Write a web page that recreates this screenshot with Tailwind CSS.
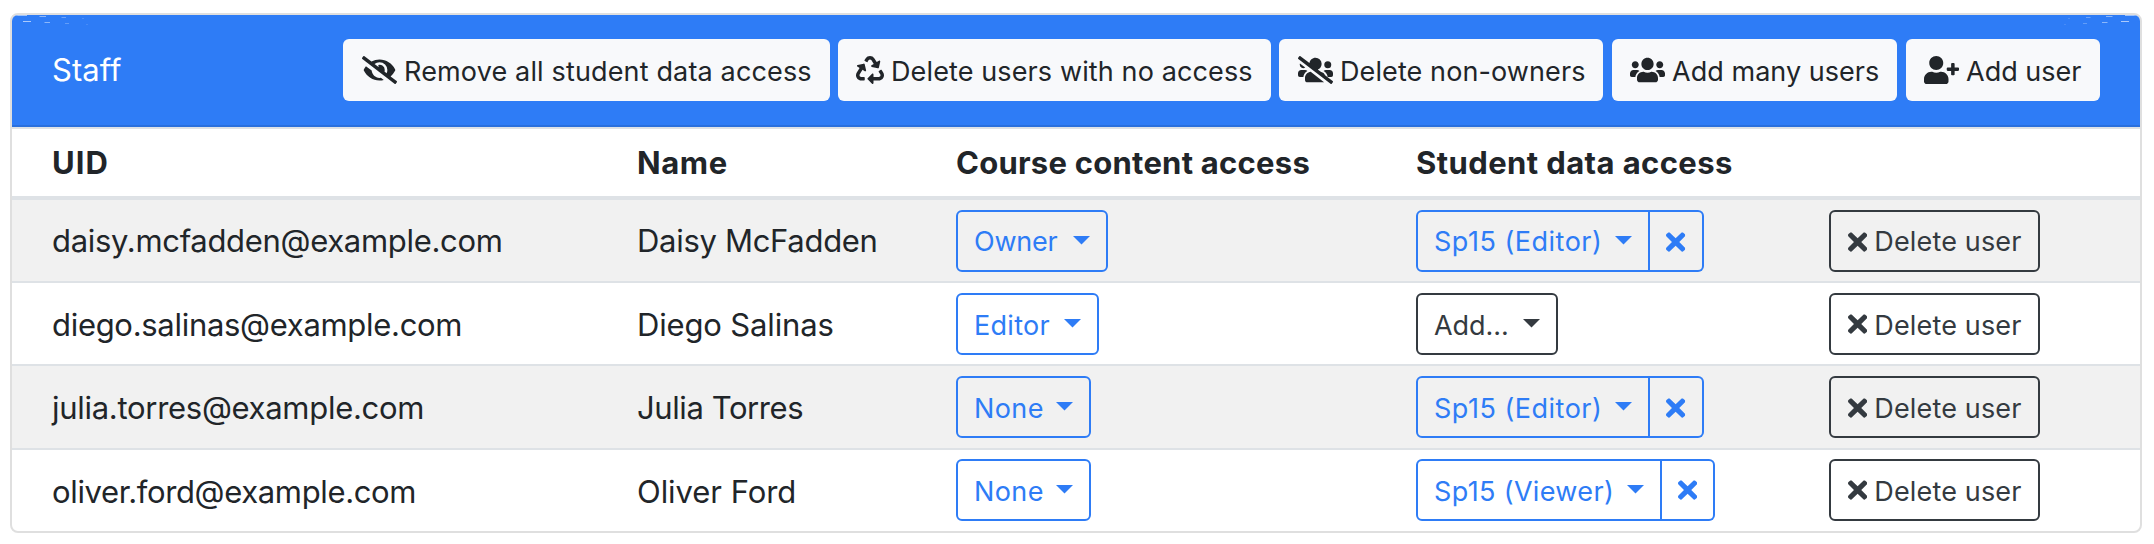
<!DOCTYPE html>
<html lang="en">
<head>
<meta charset="utf-8">
<title>Staff</title>
<script src="https://cdn.jsdelivr.net/npm/@tailwindcss/browser@4"></script>
</head>
<body class="bg-white font-[Inter,sans-serif] text-[#212529]">
<svg class="hidden">
  <symbol id="times" viewBox="0 0 352 512"><path d="M242.72 256l100.07-100.07c12.28-12.28 12.28-32.19 0-44.48l-22.24-22.24c-12.28-12.28-32.19-12.28-44.48 0L176 189.28 75.93 89.21c-12.28-12.28-32.19-12.28-44.48 0L9.21 111.45c-12.28 12.28-12.28 32.19 0 44.48L109.28 256 9.21 356.07c-12.28 12.28-12.28 32.19 0 44.48l22.24 22.24c12.28 12.28 32.2 12.28 44.48 0L176 322.72l100.07 100.07c12.28 12.28 32.2 12.28 44.48 0l22.24-22.24c12.28-12.28 12.28-32.19 0-44.48L242.72 256z"/></symbol>
  <symbol id="flecks" viewBox="0 0 80 12"><g fill="#fff"><path opacity=".55" d="M3 0h12v1H6z"/><path opacity=".45" d="M27 1h7v1h-6z"/><path opacity=".3" d="M49 2h5v1h-4z"/><path opacity=".15" d="M70 3h2v1h-2z"/><path opacity=".6" d="M11 6h8v1h-8z"/><path opacity=".45" d="M32 7h6v1h-5z"/><path opacity=".25" d="M53 8h4v1h-4z"/><path opacity=".12" d="M74 9h2v1h-2z"/></g></symbol>
</svg>
<main class="pt-[13px] pl-[10px] w-[2142px]">
<section class="relative border-2 border-[#dfdfdf] rounded-[8px] overflow-hidden h-[520px]">
  <svg class="absolute left-0 top-0 w-[80px] h-[12px]"><use href="#flecks"/></svg>
  <svg class="absolute right-0 top-0 w-[80px] h-[12px] -scale-x-100"><use href="#flecks"/></svg>
  <header class="flex items-center h-[112px] bg-[#2e7cf6] border-b-2 border-[#296fdd] pl-[40px] pr-[40px] text-white">
    <h2 class="text-[31px] tracking-[0.04px] pt-[1px]">Staff</h2>
    <div class="ml-auto flex text-[27px] text-[#212529] leading-none">
      <button class="flex items-center h-[62px] w-[487px] bg-[#f8f9fb] rounded-[6px] pl-[19px] mr-[8px]">
        <svg class="w-[35px] h-[28px] fill-current shrink-0" viewBox="0 0 640 512"><path d="M320 400c-75.85 0-137.25-58.71-142.9-133.11L72.2 185.82c-13.79 17.3-26.48 35.59-36.72 55.59a32.35 32.35 0 0 0 0 29.19C89.71 376.41 197.07 448 320 448c26.91 0 52.87-4 77.89-10.46L346 397.39a144.13 144.13 0 0 1-26 2.61zm313.82 58.1l-110.55-85.44a331.25 331.25 0 0 0 81.25-102.07 32.35 32.35 0 0 0 0-29.19C550.29 135.59 442.93 64 320 64a308.15 308.15 0 0 0-147.32 37.7L45.46 3.37A16 16 0 0 0 23 6.18L3.37 31.45A16 16 0 0 0 6.18 53.9l588.36 454.73a16 16 0 0 0 22.46-2.81l19.64-25.27a16 16 0 0 0-2.82-22.45zM450.19 314.6l-39.32-30.38A94.75 94.75 0 0 0 416 256a94.76 94.76 0 0 0-121.31-92.21A47.65 47.65 0 0 1 304 192a46.64 46.64 0 0 1-1.54 10l-73.61-56.89A142.31 142.31 0 0 1 320 112a143.92 143.92 0 0 1 144 144c0 21.63-5.29 41.79-13.81 60.12z"/></svg>
        <span class="whitespace-nowrap pl-[7px] pt-[2px] tracking-[0.15px]">Remove all student data access</span>
      </button>
      <button class="flex items-center h-[62px] w-[433px] bg-[#f8f9fb] rounded-[6px] pl-[18px] mr-[8px]">
        <svg class="w-[28px] h-[28px] fill-current shrink-0" viewBox="0 0 512 512"><path d="M184.561 261.903c3.232 13.997-12.123 24.635-24.068 17.168l-40.736-25.455-50.867 81.402C55.606 356.273 70.96 384 96.012 384H148c6.627 0 12 5.373 12 12v40c0 6.627-5.373 12-12 12H96.115c-75.334 0-121.302-83.048-81.408-146.88l50.822-81.388-40.725-25.448c-12.081-7.547-8.966-25.961 4.879-29.158l110.237-25.45c8.611-1.988 17.201 3.381 19.189 11.99l25.452 110.237zm98.561-182.915l41.289 66.076-40.74 25.457c-12.051 7.528-9 25.953 4.879 29.158l110.237 25.45c8.672 1.999 17.215-3.438 19.189-11.99l25.45-110.237c3.197-13.844-11.99-24.719-24.068-17.168l-40.687 25.424-41.263-66.082c-37.521-60.033-125.209-60.171-162.816 0l-17.963 28.766c-3.51 5.62-1.8 13.021 3.82 16.533l33.919 21.195c5.62 3.512 13.024 1.803 16.536-3.817l17.961-28.743c12.712-20.341 41.973-19.676 54.257-.022zM497.288 301.12l-27.515-44.065c-3.511-5.623-10.916-7.334-16.538-3.821l-33.861 21.159c-5.62 3.512-7.33 10.915-3.818 16.536l27.564 44.112c13.257 21.211-2.057 48.96-27.136 48.96H320V336.02c0-14.213-17.242-21.383-27.313-11.313l-80 79.981c-6.249 6.248-6.249 16.379 0 22.627l80 79.989C302.689 517.308 320 510.3 320 495.989V448h95.88c75.274 0 121.335-82.997 81.408-146.88z"/></svg>
        <span class="whitespace-nowrap pl-[7px] pt-[2px] tracking-[0.12px]">Delete users with no access</span>
      </button>
      <button class="flex items-center h-[62px] w-[324px] bg-[#f8f9fb] rounded-[6px] pl-[19px] mr-[9px]">
        <svg class="w-[35px] h-[28px] fill-current shrink-0" viewBox="0 0 640 512"><path d="M132.65,212.32,36.21,137.78A63.4,63.4,0,0,0,32,160a63.84,63.84,0,0,0,100.65,52.32Zm40.44,62.28A63.79,63.79,0,0,0,128,256H64A64.06,64.06,0,0,0,0,320v32a32,32,0,0,0,32,32H97.91A146.62,146.62,0,0,1,173.09,274.6ZM544,224a64,64,0,1,0-64-64A64.06,64.06,0,0,0,544,224ZM500.56,355.11a114.24,114.24,0,0,0-84.47-65.28L361,247.23c41.46-16.3,71-55.92,71-103.23A111.93,111.93,0,0,0,320,32c-57.14,0-103.69,42.83-110.6,98.08L45.46,3.38A16,16,0,0,0,23,6.19L3.37,31.46A16,16,0,0,0,6.18,53.91L594.53,508.63A16,16,0,0,0,617,505.81l19.64-25.26a16,16,0,0,0-2.81-22.45ZM128,403.21V432a48,48,0,0,0,48,48H464a47.45,47.45,0,0,0,12.57-1.87L232,289.13C173.74,294.83,128,343.42,128,403.21ZM576,256H512a63.79,63.79,0,0,0-45.09,18.6A146.29,146.29,0,0,1,542,384h66a32,32,0,0,0,32-32V320A64.06,64.06,0,0,0,576,256Z"/></svg>
        <span class="whitespace-nowrap pl-[7px] pt-[2px] tracking-[0.1px]">Delete non-owners</span>
      </button>
      <button class="flex items-center h-[62px] w-[285px] bg-[#f8f9fb] rounded-[6px] pl-[18px] mr-[9px]">
        <svg class="w-[35px] h-[28px] fill-current shrink-0" viewBox="0 0 640 512"><path d="M96 224c35.3 0 64-28.7 64-64s-28.7-64-64-64-64 28.7-64 64 28.7 64 64 64zm448 0c35.3 0 64-28.7 64-64s-28.7-64-64-64-64 28.7-64 64 28.7 64 64 64zm32 32h-64c-17.6 0-33.5 7.1-45.1 18.6 40.3 22.1 68.9 62 75.1 109.4h66c17.7 0 32-14.3 32-32v-32c0-35.3-28.7-64-64-64zm-256 0c61.9 0 112-50.1 112-112S381.9 32 320 32 208 82.1 208 144s50.1 112 112 112zm76.8 32h-8.3c-20.8 10-43.9 16-68.5 16s-47.6-6-68.5-16h-8.3C179.6 288 128 339.6 128 403.2V432c0 26.5 21.5 48 48 48h288c26.5 0 48-21.5 48-48v-28.8c0-63.6-51.6-115.2-115.2-115.2zm-223.7-13.4C161.5 263.1 145.6 256 128 256H64c-35.3 0-64 28.7-64 64v32c0 17.7 14.3 32 32 32h65.9c6.3-47.4 34.9-87.3 75.2-109.4z"/></svg>
        <span class="whitespace-nowrap pl-[7px] pt-[2px] tracking-[0.04px]">Add many users</span>
      </button>
      <button class="flex items-center h-[62px] w-[194px] bg-[#f8f9fb] rounded-[6px] pl-[18px]">
        <svg class="w-[35px] h-[28px] fill-current shrink-0" viewBox="0 0 640 512"><path d="M624 208h-64v-64c0-8.8-7.2-16-16-16h-32c-8.8 0-16 7.2-16 16v64h-64c-8.8 0-16 7.2-16 16v32c0 8.8 7.2 16 16 16h64v64c0 8.8 7.2 16 16 16h32c8.8 0 16-7.2 16-16v-64h64c8.8 0 16-7.2 16-16v-32c0-8.8-7.2-16-16-16zm-400 48c70.7 0 128-57.3 128-128S294.7 0 224 0 96 57.3 96 128s57.3 128 128 128zm89.6 32h-16.7c-22.2 10.2-46.9 16-72.9 16s-50.6-5.8-72.9-16h-16.7C60.2 288 0 348.2 0 422.4V464c0 26.5 21.5 48 48 48h352c26.5 0 48-21.5 48-48v-41.6c0-74.2-60.2-134.4-134.4-134.4z"/></svg>
        <span class="whitespace-nowrap pl-[7px] pt-[2px]">Add user</span>
      </button>
    </div>
  </header>

  <div class="text-[31px] leading-none whitespace-nowrap">
    <div class="grid grid-cols-[585px_319px_460px_413px_1fr] pl-[40px] items-center h-[73px] border-t-2 border-b-4 border-[#dee2e6] font-bold">
      <div class="tracking-[1px]">UID</div>
      <div class="tracking-[0.6px]">Name</div>
      <div class="tracking-[0.25px]">Course content access</div>
      <div class="tracking-[0.41px]">Student data access</div>
      <div></div>
    </div>

    <div class="grid grid-cols-[585px_319px_460px_413px_1fr] pl-[40px] pt-[10px] items-start h-[81px] bg-[#f1f1f1]">
      <div class="h-[62px] flex items-center pb-[2px] tracking-[-0.31px]">daisy.mcfadden@example.com</div>
      <div class="h-[62px] flex items-center pb-[2px] tracking-[-0.3px]">Daisy McFadden</div>
      <div class="flex text-[27px] text-[#2e7cf6]">
        <button class="flex items-center justify-between h-[62px] w-[152px] border-2 border-current rounded-[6px] px-[16px]"><span class="pt-[1px] tracking-[-0.21px]">Owner</span><svg class="w-[17px] h-[9px] mb-[2px] fill-current" viewBox="0 0 17 9"><path d="M0 0h17L8.5 8.5z"/></svg></button>
      </div>
      <div class="flex text-[27px] text-[#2e7cf6]">
        <button class="flex items-center justify-between h-[62px] w-[234px] border-2 border-current rounded-l-[6px] px-[16px]"><span class="pt-[1px] tracking-[0.5px]">Sp15 (Editor)</span><svg class="w-[17px] h-[9px] mb-[2px] fill-current" viewBox="0 0 17 9"><path d="M0 0h17L8.5 8.5z"/></svg></button>
        <button class="flex items-center justify-center h-[62px] w-[54px] border-2 border-l-0 border-current rounded-r-[6px] pt-[2px]"><svg class="w-[19.25px] h-[28px] fill-current"><use href="#times"/></svg></button>
      </div>
      <div class="flex text-[27px] text-[#343a40]">
        <button class="flex items-center h-[62px] w-[211px] border-2 border-current rounded-[6px] pl-[17px]"><svg class="w-[19.25px] h-[28px] mt-[2px] fill-current shrink-0"><use href="#times"/></svg><span class="pl-[7px] pt-[1px] tracking-[0.16px]">Delete user</span></button>
      </div>
    </div>

    <div class="grid grid-cols-[585px_319px_460px_413px_1fr] pl-[40px] pt-[10px] items-start h-[83px] border-t-2 border-[#dee2e6]">
      <div class="h-[62px] flex items-center tracking-[-0.3px]">diego.salinas@example.com</div>
      <div class="h-[62px] flex items-center tracking-[-0.16px]">Diego Salinas</div>
      <div class="flex text-[27px] text-[#2e7cf6]">
        <button class="flex items-center justify-between h-[62px] w-[143px] border-2 border-current rounded-[6px] px-[16px]"><span class="pt-[2px] tracking-[0.3px]">Editor</span><svg class="w-[17px] h-[9px] mb-[2px] fill-current" viewBox="0 0 17 9"><path d="M0 0h17L8.5 8.5z"/></svg></button>
      </div>
      <div class="flex text-[27px] text-[#343a40]">
        <button class="flex items-center justify-between h-[62px] w-[142px] border-2 border-current rounded-[6px] px-[16px]"><span class="pt-[2px] tracking-[-0.05px]">Add...</span><svg class="w-[17px] h-[9px] mb-[2px] fill-current" viewBox="0 0 17 9"><path d="M0 0h17L8.5 8.5z"/></svg></button>
      </div>
      <div class="flex text-[27px] text-[#343a40]">
        <button class="flex items-center h-[62px] w-[211px] border-2 border-current rounded-[6px] pl-[17px]"><svg class="w-[19.25px] h-[28px] fill-current shrink-0"><use href="#times"/></svg><span class="pl-[7px] pt-[2px] tracking-[0.16px]">Delete user</span></button>
      </div>
    </div>

    <div class="grid grid-cols-[585px_319px_460px_413px_1fr] pl-[40px] pt-[10px] items-start h-[84px] border-t-2 border-[#dee2e6] bg-[#f1f1f1]">
      <div class="h-[62px] flex items-center tracking-[-0.29px]">julia.torres@example.com</div>
      <div class="h-[62px] flex items-center tracking-[-0.41px]">Julia Torres</div>
      <div class="flex text-[27px] text-[#2e7cf6]">
        <button class="flex items-center justify-between h-[62px] w-[135px] border-2 border-current rounded-[6px] px-[16px]"><span class="pt-[2px] tracking-[0.4px]">None</span><svg class="w-[17px] h-[9px] mb-[2px] fill-current" viewBox="0 0 17 9"><path d="M0 0h17L8.5 8.5z"/></svg></button>
      </div>
      <div class="flex text-[27px] text-[#2e7cf6]">
        <button class="flex items-center justify-between h-[62px] w-[234px] border-2 border-current rounded-l-[6px] px-[16px]"><span class="pt-[2px] tracking-[0.5px]">Sp15 (Editor)</span><svg class="w-[17px] h-[9px] mb-[2px] fill-current" viewBox="0 0 17 9"><path d="M0 0h17L8.5 8.5z"/></svg></button>
        <button class="flex items-center justify-center h-[62px] w-[54px] border-2 border-l-0 border-current rounded-r-[6px] pt-[2px]"><svg class="w-[19.25px] h-[28px] fill-current"><use href="#times"/></svg></button>
      </div>
      <div class="flex text-[27px] text-[#343a40]">
        <button class="flex items-center h-[62px] w-[211px] border-2 border-current rounded-[6px] pl-[17px]"><svg class="w-[19.25px] h-[28px] mt-[2px] fill-current shrink-0"><use href="#times"/></svg><span class="pl-[7px] pt-[2px] tracking-[0.16px]">Delete user</span></button>
      </div>
    </div>

    <div class="grid grid-cols-[585px_319px_460px_413px_1fr] pl-[40px] pt-[9px] items-start h-[83px] border-t-2 border-[#dee2e6]">
      <div class="h-[62px] flex items-center pt-[2px] tracking-[-0.35px]">oliver.ford@example.com</div>
      <div class="h-[62px] flex items-center pt-[2px] tracking-[-0.05px]">Oliver Ford</div>
      <div class="flex text-[27px] text-[#2e7cf6]">
        <button class="flex items-center justify-between h-[62px] w-[135px] border-2 border-current rounded-[6px] px-[16px]"><span class="pt-[2px] tracking-[0.4px]">None</span><svg class="w-[17px] h-[9px] mb-[2px] fill-current" viewBox="0 0 17 9"><path d="M0 0h17L8.5 8.5z"/></svg></button>
      </div>
      <div class="flex text-[27px] text-[#2e7cf6]">
        <button class="flex items-center justify-between h-[62px] w-[246px] border-2 border-current rounded-l-[6px] px-[16px]"><span class="pt-[2px] tracking-[0.35px]">Sp15 (Viewer)</span><svg class="w-[17px] h-[9px] mb-[2px] fill-current" viewBox="0 0 17 9"><path d="M0 0h17L8.5 8.5z"/></svg></button>
        <button class="flex items-center justify-center h-[62px] w-[53px] border-2 border-l-0 border-current rounded-r-[6px]"><svg class="w-[19.25px] h-[28px] fill-current"><use href="#times"/></svg></button>
      </div>
      <div class="flex text-[27px] text-[#343a40]">
        <button class="flex items-center h-[62px] w-[211px] border-2 border-current rounded-[6px] pl-[17px]"><svg class="w-[19.25px] h-[28px] fill-current shrink-0"><use href="#times"/></svg><span class="pl-[7px] pt-[2px] tracking-[0.16px]">Delete user</span></button>
      </div>
    </div>
  </div>
</section>
</main>
</body>
</html>
